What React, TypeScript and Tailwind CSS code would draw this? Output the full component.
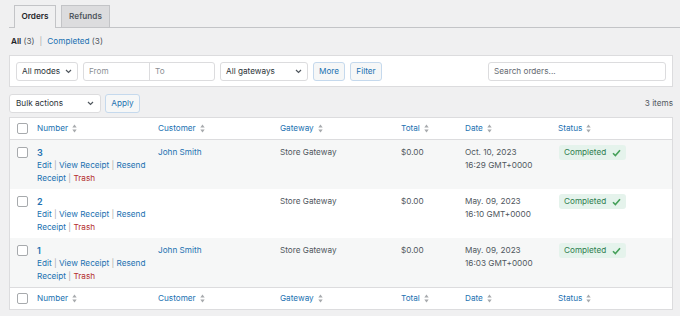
import React from 'react';

const COLS = 'grid grid-cols-[27px_121px_122px_121px_64px_93px_1fr]';

const ORDERS = [
  { id: '3', customer: 'John Smith', date: 'Oct. 10, 2023', time: '16:29 GMT+0000' },
  { id: '2', customer: '', date: 'May. 09, 2023', time: '16:10 GMT+0000' },
  { id: '1', customer: 'John Smith', date: 'May. 09, 2023', time: '16:03 GMT+0000' },
];

function SortIcon() {
  return (
    <svg width="5" height="9" viewBox="0 0 5 9" className="ml-[4px] inline-block">
      <path d="M2.5 0.5 L4.7 3.5 L0.3 3.5 Z" fill="#a7aaad" />
      <path d="M2.5 8.5 L4.7 5.5 L0.3 5.5 Z" fill="#a7aaad" />
    </svg>
  );
}

function Chevron() {
  return (
    <svg width="7" height="5" viewBox="0 0 7 5">
      <path d="M1 1 L3.5 3.5 L6 1" fill="none" stroke="#50575e" strokeWidth="1.2" />
    </svg>
  );
}

function Checkbox() {
  return <div className="w-[11px] h-[11px] rounded-[2px] border border-[#a7aaad] bg-white" />;
}

function HeadRow({ top }: { top?: boolean }) {
  return (
    <div className={`${COLS} h-[22px] items-center bg-white ${top ? 'border-b' : 'border-t'} border-[#dcdcde] text-[#2271b1]`}>
      <div className="pl-[7px]"><Checkbox /></div>
      {['Number', 'Customer', 'Gateway', 'Total', 'Date', 'Status'].map((h) => (
        <div key={h} className="flex items-center">{h}<SortIcon /></div>
      ))}
    </div>
  );
}

export default function App() {
  return (
    <div className="w-[680px] h-[316px] overflow-hidden bg-[#f0f0f1] text-[8.2px] leading-[13px] text-[#50575e]" style={{ fontFamily: 'Inter, "Liberation Sans", sans-serif' }}>
      {/* tabs */}
      <div className="flex items-end gap-[5px] pt-[5px] ml-[9px] pl-[5px] border-b border-[#c3c4c7] h-[28px]">
        <div className="h-[23px] w-[42px] flex items-center justify-center border border-b-0 border-[#c3c4c7] bg-[#f0f0f1] font-semibold text-[#1d2327] -mb-px pb-px">Orders</div>
        <div className="h-[22px] w-[49px] flex items-center justify-center border border-b-0 border-[#c3c4c7] bg-[#dcdcde] font-semibold text-[#50575e]">Refunds</div>
      </div>

      <div className="pl-[11px] pt-[7px] h-[27px] text-[#50575e]">
        <span className="font-semibold text-[#1d2327]">All</span> (3)<span className="mx-[5px] text-[#a7aaad]">|</span>
        <span className="text-[#2271b1]">Completed</span> (3)
      </div>

      {/* filters */}
      <div className="ml-[9px] mr-[7px] h-[32px] bg-white border border-[#dcdcde] flex items-center px-[6px]">
        <div className="w-[62px] h-[19px] border border-[#dcdcde] rounded-[3px] flex items-center justify-between px-[5px] text-[#2c3338]">All modes <Chevron /></div>
        <div className="ml-[5px] w-[132px] h-[19px] border border-[#dcdcde] rounded-[3px] flex text-[#8c8f94]">
          <div className="w-[66px] border-r border-[#dcdcde] px-[5px] flex items-center">From</div>
          <div className="px-[5px] flex items-center">To</div>
        </div>
        <div className="ml-[5px] w-[88px] h-[19px] border border-[#dcdcde] rounded-[3px] flex items-center justify-between px-[5px] text-[#2c3338]">All gateways <Chevron /></div>
        <div className="ml-[5px] w-[32px] h-[19px] border border-[#c5d9ed] bg-[#f6f7f7] rounded-[3px] flex items-center justify-center text-[#2271b1]">More</div>
        <div className="ml-[5px] w-[32px] h-[19px] border border-[#c5d9ed] bg-[#f6f7f7] rounded-[3px] flex items-center justify-center text-[#2271b1]">Filter</div>
        <div className="ml-auto w-[178px] h-[19px] border border-[#dcdcde] rounded-[3px] flex items-center px-[5px] text-[#646970]">Search orders...</div>
      </div>

      {/* bulk */}
      <div className="ml-[9px] mr-[7px] mt-[6px] h-[20px] flex items-center">
        <div className="w-[92px] h-[19px] border border-[#dcdcde] bg-white rounded-[3px] flex items-center justify-between px-[6px] text-[#2c3338]">Bulk actions <Chevron /></div>
        <div className="ml-[4px] w-[35px] h-[19px] border border-[#c5d9ed] bg-[#f6f7f7] rounded-[3px] flex items-center justify-center text-[#2271b1]">Apply</div>
        <div className="ml-auto text-[#50575e]">3 items</div>
      </div>

      {/* table */}
      <div className="ml-[9px] mr-[7px] mt-[4px] border border-[#dcdcde] bg-white">
        <HeadRow top />
        {ORDERS.map((o, i) => (
          <div key={o.id} className={`${COLS} h-[49px] pt-[6px] ${i % 2 === 0 ? 'bg-[#f6f7f7]' : 'bg-white'}`}>
            <div className="pl-[7px] pt-[1px]"><Checkbox /></div>
            <div className="text-[#2271b1]">
              <div className="font-semibold text-[9px]">{o.id}</div>
              <div>Edit <span className="text-[#a7aaad]">|</span> View Receipt <span className="text-[#a7aaad]">|</span> Resend</div>
              <div>Receipt <span className="text-[#a7aaad]">|</span> <span className="text-[#b32d2e]">Trash</span></div>
            </div>
            <div className="text-[#2271b1]">{o.customer}</div>
            <div>Store Gateway</div>
            <div>$0.00</div>
            <div>
              <div>{o.date}</div>
              <div>{o.time}</div>
            </div>
            <div>
              <div className="-mt-[1px] ml-[1px] inline-flex items-center gap-[6px] h-[15px] px-[5px] rounded-[3px] bg-[#e5f3ec] text-[#2e7d4f]">
                Completed
                <svg width="9" height="8" viewBox="0 0 9 8">
                  <path d="M1 4.2 L3.4 6.6 L8 1.2" fill="none" stroke="#46a05a" strokeWidth="1.6" />
                </svg>
              </div>
            </div>
          </div>
        ))}
        <HeadRow />
      </div>
    </div>
  );
}
